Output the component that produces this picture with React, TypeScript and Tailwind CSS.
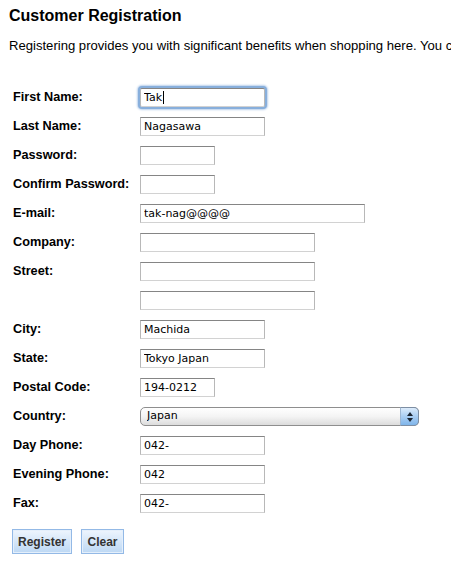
import React from "react"

const fieldText = "font-['DejaVu_Sans','Lucida_Grande',sans-serif] text-[11px] text-black"

function Field({ label, value = "", w, focused = false }: { label?: string; value?: string; w: string; focused?: boolean }) {
  return (
    <div className="flex h-[29px] items-center">
      <label className="w-[127px] shrink-0 text-[12.7px] font-bold">{label}</label>
      <div className="relative flex">
        <input
          type="text"
          defaultValue={value}
          className={`${w} h-[19px] border border-[#b8b8b8] border-t-[#858585] border-b-[#d2d2d2] bg-white pl-[3px] outline-none ${fieldText} ${
            focused ? "rounded-[2px] shadow-[0_0_0_2px_#88afdc,0_0_2px_3px_#b9d0ec]" : ""
          }`}
        />
        {focused && <span className="absolute left-[23px] top-[3px] h-[13px] w-px bg-black" />}
      </div>
    </div>
  )
}

export default function App() {
  return (
    <div className="h-[588px] w-[451px] overflow-hidden bg-white font-['Liberation_Sans',Arial,sans-serif] text-black">
      <h1 className="pl-[9px] pt-[7px] text-[16px] font-bold leading-[18px]">Customer Registration</h1>
      <p className="mt-[13px] whitespace-nowrap pl-[9px] text-[13.1px] leading-[16px]">
        Registering provides you with significant benefits when shopping here. You can track your orders
      </p>

      <form className="mt-[29px] pl-[13px]" onSubmit={(e) => e.preventDefault()}>
        <Field label="First Name:" value="Tak" w="w-[125px]" focused />
        <Field label="Last Name:" value="Nagasawa" w="w-[125px]" />
        <Field label="Password:" w="w-[75px]" />
        <Field label="Confirm Password:" w="w-[75px]" />
        <Field label="E-mail:" value="tak-nag@@@@" w="w-[225px]" />
        <Field label="Company:" w="w-[175px]" />
        <Field label="Street:" w="w-[175px]" />
        <Field w="w-[175px]" />
        <Field label="City:" value="Machida" w="w-[125px]" />
        <Field label="State:" value="Tokyo Japan" w="w-[125px]" />
        <Field label="Postal Code:" value="194-0212" w="w-[75px]" />

        <div className="flex h-[29px] items-center">
          <label className="w-[127px] shrink-0 text-[12.7px] font-bold">Country:</label>
          <div className="relative flex">
            <select
              defaultValue="Japan"
              className={`h-[19px] w-[279px] appearance-none rounded-[5px] border border-[#8e8e8e] bg-gradient-to-b from-white via-[#f4f4f4] to-[#dcdcdc] pl-[6px] outline-none ${fieldText}`}
            >
              <option>Japan</option>
              <option>United States</option>
            </select>
            <span className="pointer-events-none absolute right-0 top-0 flex h-[19px] w-[19px] flex-col items-center justify-center gap-[2px] rounded-r-[5px] border border-l-[#9db6d2] border-[#7d8ea3] bg-gradient-to-b from-[#dcebfb] via-[#a9cdf2] to-[#7fb5ea]">
              <svg width="6" height="4" viewBox="0 0 6 4"><path d="M3 0 L6 4 L0 4 Z" fill="#1c2633" /></svg>
              <svg width="6" height="4" viewBox="0 0 6 4"><path d="M0 0 L6 0 L3 4 Z" fill="#1c2633" /></svg>
            </span>
          </div>
        </div>

        <Field label="Day Phone:" value="042-" w="w-[125px]" />
        <Field label="Evening Phone:" value="042" w="w-[125px]" />
        <Field label="Fax:" value="042-" w="w-[125px]" />

        <div className="mt-[11px] flex gap-[9px]">
          <button
            type="submit"
            className="-ml-px h-[25px] w-[60px] border border-[#93b9e6] bg-gradient-to-b from-[#eef5fd] to-[#bdd8f4] text-[12px] font-bold text-[#333] shadow-[inset_0_0_0_1px_#e4effb]"
          >
            Register
          </button>
          <button
            type="reset"
            className="h-[25px] w-[43px] border border-[#93b9e6] bg-gradient-to-b from-[#eef5fd] to-[#bdd8f4] text-[12px] font-bold text-[#333] shadow-[inset_0_0_0_1px_#e4effb]"
          >
            Clear
          </button>
        </div>
      </form>
    </div>
  )
}
